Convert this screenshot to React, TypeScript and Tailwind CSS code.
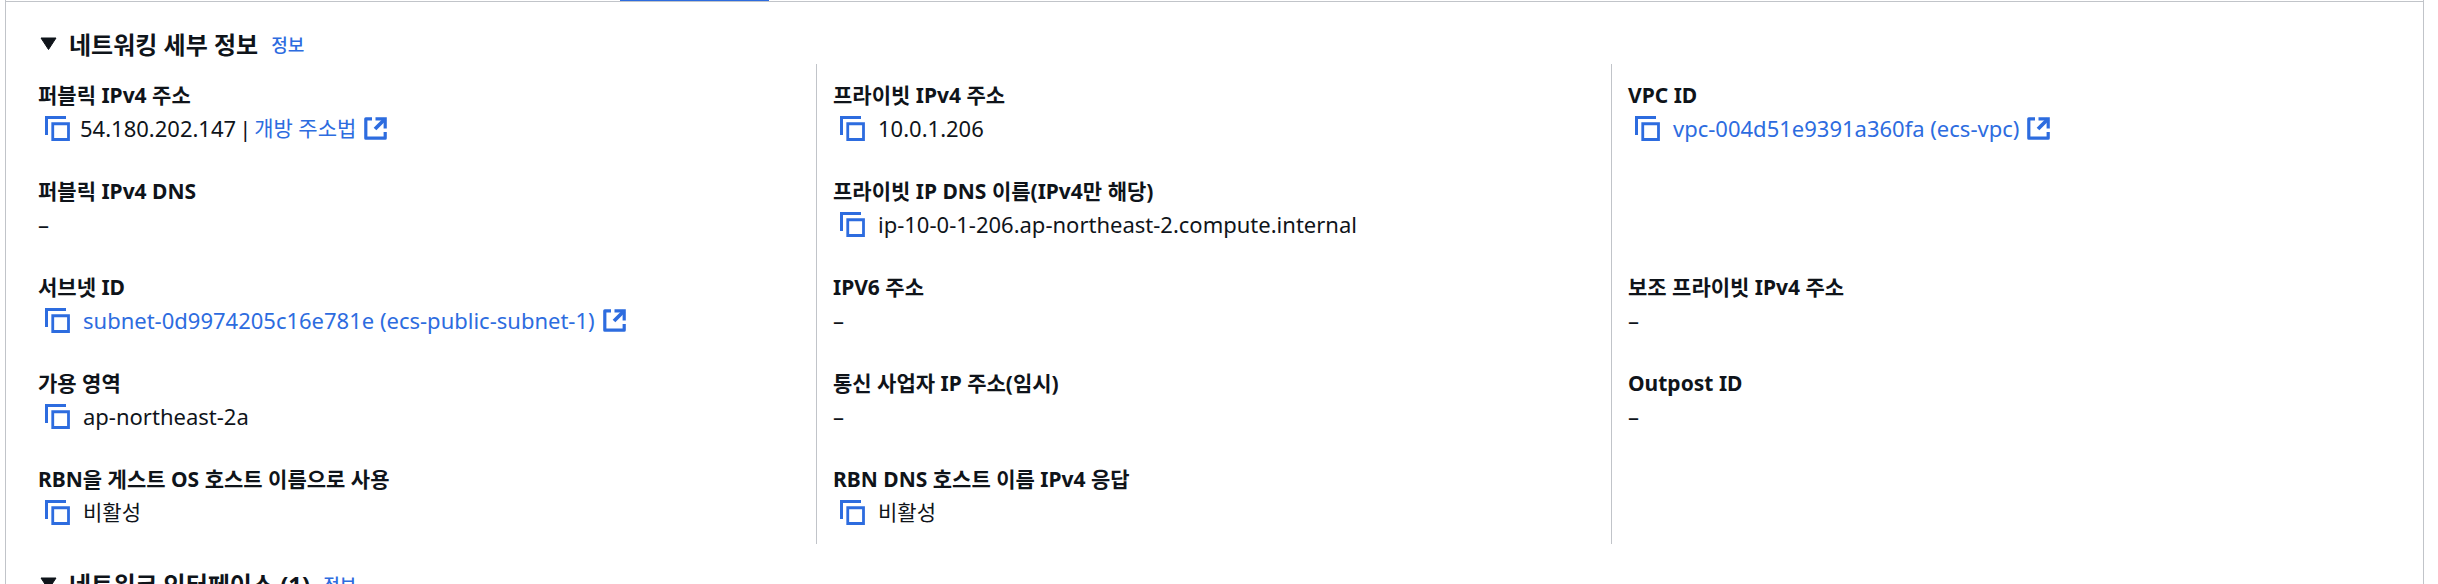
import type { ReactNode } from "react";

function CopyButton({ label }: { label: string }) {
  return (
    <button type="button" aria-label={`${label} 복사`} className="ml-[7px] shrink-0 text-[#2d6cdf]">
      <svg width="25" height="25" viewBox="0 0 25 25" fill="none" stroke="currentColor" aria-hidden="true">
        <path d="M1.5 19V1.5H21" strokeWidth="3" />
        <path d="M7.75 7.75H23.5V23.5H7.75Z" strokeWidth="2.8" />
      </svg>
    </button>
  );
}

function ExternalIcon() {
  return (
    <svg className="shrink-0" width="23" height="23" viewBox="0 0 23 23" fill="none" stroke="currentColor" strokeWidth="3.2" aria-hidden="true">
      <path d="M8 1.8H1.8V21.2H21.2V15" strokeLinejoin="round" />
      <path d="M11.5 1.8H21.2V11.5" />
      <path d="M21 2L11 12" strokeWidth="3.8" />
    </svg>
  );
}

function ExternalLink({ children }: { children: ReactNode }) {
  return (
    <a href="#" className="flex items-center gap-2 text-[#2d6cdf]">
      {children}
      <ExternalIcon />
    </a>
  );
}

type Item = { label: string; text?: string; link?: string };

const rows: (Item | null)[][] = [
  [
    { label: "퍼블릭 IPv4 주소", text: "54.180.202.147", link: "개방 주소법" },
    { label: "프라이빗 IPv4 주소", text: "10.0.1.206" },
    { label: "VPC ID", link: "vpc-004d51e9391a360fa (ecs-vpc)" },
  ],
  [
    { label: "퍼블릭 IPv4 DNS" },
    { label: "프라이빗 IP DNS 이름(IPv4만 해당)", text: "ip-10-0-1-206.ap-northeast-2.compute.internal" },
    null,
  ],
  [
    { label: "서브넷 ID", link: "subnet-0d9974205c16e781e (ecs-public-subnet-1)" },
    { label: "IPV6 주소" },
    { label: "보조 프라이빗 IPv4 주소" },
  ],
  [
    { label: "가용 영역", text: "ap-northeast-2a" },
    { label: "통신 사업자 IP 주소(임시)" },
    { label: "Outpost ID" },
  ],
  [
    { label: "RBN을 게스트 OS 호스트 이름으로 사용", text: "비활성" },
    { label: "RBN DNS 호스트 이름 IPv4 응답", text: "비활성" },
    null,
  ],
];

// Hangul glyphs look larger than Latin ones at the same size.
function Text({ children }: { children: string }) {
  return <span className={/[가-힣]/.test(children) ? "text-[21px]" : "text-[22px]"}>{children}</span>;
}

function Value({ item }: { item: Item }) {
  if (!item.text && !item.link) return <Text>–</Text>;
  return (
    <>
      <CopyButton label={item.label} />
      <span className={item.text && item.link ? "ml-[10px] flex gap-[3px]" : "ml-[13px] flex"}>
        {item.text && <Text>{item.text}</Text>}
        {item.text && item.link && <Text>|</Text>}
        {item.link && (
          <ExternalLink>
            <Text>{item.link}</Text>
          </ExternalLink>
        )}
      </span>
    </>
  );
}

function SectionHeading({ title }: { title: string }) {
  return (
    <div className="flex h-10 items-center pl-[17px]">
      <h2>
        <button type="button" aria-expanded="true" className="flex items-center gap-3 text-[24px] font-bold">
          <svg className="ml-[2px]" width="17" height="14" viewBox="0 0 17 14" aria-hidden="true">
            <path d="M1 1H16L8.5 12.5Z" fill="currentColor" stroke="currentColor" strokeLinejoin="round" />
          </svg>
          {title}
        </button>
      </h2>
      <a href="#" className="ml-[13px] pt-[3px] text-[18px] font-medium text-[#2d6cdf]">
        정보
      </a>
    </div>
  );
}

export default function App() {
  return (
    <div className="flex h-screen flex-col overflow-hidden bg-white pr-[14px] pl-[5px] font-['Noto_Sans','Noto_Sans_CJK_KR',sans-serif] text-[21px] leading-[33px] text-[#0f141a]">
      <div className="flex grow flex-col border-x border-[#c1c4c9]">
        <div className="h-[2px] shrink-0 border-b border-[#c1c4c9]">
          <div className="ml-[614px] h-px w-[149px] bg-[#2d6cdf]" />
        </div>
        <main className="pt-[22px] pr-[17px] pl-[15px]">
          <section>
            <SectionHeading title="네트워킹 세부 정보" />
            <dl className="grid grid-cols-3">
              {rows.flat().map((item, i) => (
                <div
                  key={i}
                  className={`h-24 border-l py-[15px] pl-4 ${i % 3 === 0 ? "border-transparent" : "border-[#c1c4c9]"}`}
                >
                  {item && (
                    <>
                      <dt className="font-bold">{item.label}</dt>
                      <dd className="flex h-[33px] items-center">
                        <Value item={item} />
                      </dd>
                    </>
                  )}
                </div>
              ))}
            </dl>
          </section>
          <section className="mt-5">
            <SectionHeading title="네트워크 인터페이스 (1)" />
          </section>
        </main>
      </div>
    </div>
  );
}
